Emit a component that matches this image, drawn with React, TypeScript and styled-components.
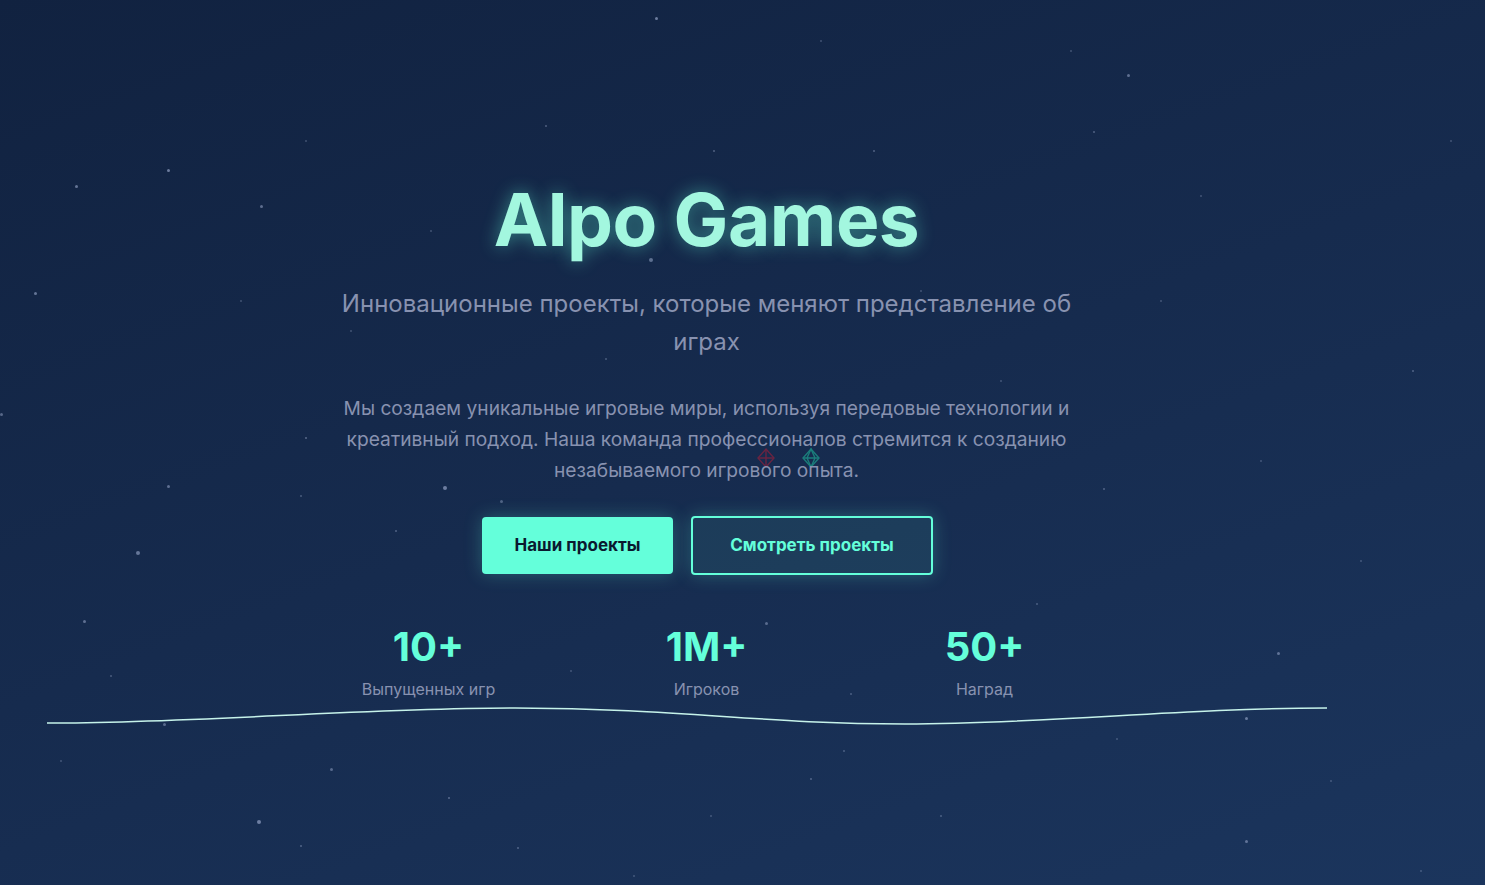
import React from "react";
import styled, { createGlobalStyle } from "styled-components";

const Global = createGlobalStyle`
  html, body { margin: 0; padding: 0; }
  body {
    background: #12243f;
    font-family: Inter, "Noto Sans", "Liberation Sans", sans-serif;
    -webkit-font-smoothing: antialiased;
  }
  * { box-sizing: border-box; }
`;

const Hero = styled.section`
  position: relative;
  overflow: hidden;
  width: 100%;
  height: 885px;
  background: linear-gradient(160deg, #112240 0%, #162b4e 50%, #1b355d 100%);
  padding: 176px 72px 0 0;
  display: flex;
  flex-direction: column;
  align-items: center;
`;

const Stars = styled.div`
  position: absolute;
  inset: 0;
  pointer-events: none;
`;

const Star = styled.span<{ $s: number; $o: number }>`
  position: absolute;
  width: ${(p) => p.$s}px;
  height: ${(p) => p.$s}px;
  border-radius: 50%;
  background: #a8b6d8;
  opacity: ${(p) => p.$o};
`;

const Content = styled.div`
  position: relative;
  z-index: 1;
  display: flex;
  flex-direction: column;
  align-items: center;
  text-align: center;
`;

const Title = styled.h1`
  margin: 0;
  font-size: 73px;
  line-height: 1.2;
  font-weight: 700;
  letter-spacing: -0.5px;
  color: #a3f7df;
  text-shadow: 0 0 18px rgba(100, 255, 218, 0.45);
`;

const Subtitle = styled.p`
  margin: 21px 0 0;
  max-width: 760px;
  font-size: 24px;
  line-height: 38px;
  font-weight: 400;
  color: #8892b0;
`;

const Description = styled.p`
  margin: 32px 0 0;
  max-width: 760px;
  font-size: 19.2px;
  line-height: 31px;
  color: #8892b0;
`;

const Buttons = styled.div`
  display: flex;
  align-items: center;
  gap: 18px;
  margin-top: 30px;
  transform: translateX(1px);
`;

const Button = styled.button<{ $variant: "solid" | "outline" }>`
  font-family: inherit;
  font-size: 17px;
  font-weight: 700;
  cursor: pointer;
  border-radius: 4px;
  padding: 0;
  height: ${(p) => (p.$variant === "solid" ? "57px" : "59px")};
  width: ${(p) => (p.$variant === "solid" ? "191px" : "242px")};
  border: ${(p) => (p.$variant === "solid" ? "none" : "2px solid #64ffda")};
  background: ${(p) => (p.$variant === "solid" ? "#64ffda" : "rgba(100, 255, 218, 0.08)")};
  color: ${(p) => (p.$variant === "solid" ? "#0a192f" : "#64ffda")};
  box-shadow: 0 0 18px rgba(100, 255, 218, 0.25);
`;

const StatsRow = styled.div`
  display: grid;
  grid-template-columns: repeat(3, 278px);
  margin-top: 48px;
`;

const Stat = styled.div`
  display: flex;
  flex-direction: column;
  align-items: center;
`;

const StatValue = styled.div`
  font-size: 40px;
  line-height: 48px;
  font-weight: 700;
  color: #64ffda;
`;

const StatLabel = styled.div`
  margin-top: 8px;
  font-size: 16px;
  line-height: 20px;
  color: #8892b0;
`;

const Wave = styled.svg`
  position: absolute;
  left: 0;
  top: 700px;
  width: 1485px;
  height: 40px;
  pointer-events: none;
`;

const Marks = styled.svg`
  position: absolute;
  left: 756px;
  top: 447px;
  width: 66px;
  height: 22px;
  pointer-events: none;
`;

const stars: [number, number, number, number][] = [
  [655, 17, 3, 0.6], [1127, 74, 3, 0.5], [75, 185, 3, 0.55], [167, 169, 3, 0.6],
  [260, 205, 3, 0.5], [34, 292, 3, 0.55], [1093, 131, 2, 0.4], [545, 125, 2, 0.4],
  [713, 150, 2, 0.4], [873, 150, 2, 0.4], [443, 486, 4, 0.6], [136, 551, 4, 0.55],
  [305, 437, 2, 0.45], [167, 485, 3, 0.5], [83, 620, 3, 0.5], [1277, 652, 3, 0.5],
  [1245, 717, 3, 0.55], [163, 723, 3, 0.45], [330, 768, 3, 0.45], [448, 797, 2, 0.45],
  [257, 820, 4, 0.6], [300, 845, 2, 0.4], [517, 847, 2, 0.4], [810, 778, 2, 0.4],
  [843, 750, 2, 0.35], [940, 815, 2, 0.35], [1245, 840, 3, 0.5], [1412, 370, 2, 0.4],
  [1103, 488, 2, 0.4], [395, 530, 2, 0.4], [1036, 603, 2, 0.35], [765, 622, 3, 0.45],
  [850, 693, 2, 0.35], [605, 358, 2, 0.35], [500, 500, 3, 0.4], [0, 413, 3, 0.45],
  [649, 258, 4, 0.5], [1260, 460, 2, 0.3], [300, 495, 2, 0.35], [1200, 195, 2, 0.3],
  [1360, 560, 2, 0.3], [920, 290, 2, 0.3], [1000, 380, 2, 0.3], [430, 230, 2, 0.3],
  [240, 300, 2, 0.3], [1160, 300, 2, 0.3], [570, 670, 2, 0.3], [1116, 738, 2, 0.3],
  [110, 675, 2, 0.35], [633, 875, 2, 0.3], [1420, 870, 2, 0.3], [1330, 780, 2, 0.3],
  [1450, 140, 2, 0.3], [60, 760, 2, 0.3], [710, 815, 2, 0.3], [905, 245, 2, 0.35],
  [350, 330, 2, 0.3], [1070, 50, 2, 0.3], [305, 140, 2, 0.3], [820, 40, 2, 0.3],
];

const statsData = [
  { value: "10+", label: "Выпущенных игр" },
  { value: "1M+", label: "Игроков" },
  { value: "50+", label: "Наград" },
];

export default function App() {
  return (
    <>
      <Global />
      <Hero>
        <Stars>
          {stars.map(([x, y, s, o], i) => (
            <Star key={i} $s={s} $o={o} style={{ left: x, top: y }} />
          ))}
        </Stars>
        <Wave viewBox="0 0 1485 40">
          <path
            d="M47 23 C 200 23, 360 8, 515 8 C 680 8, 760 24, 905 24 C 1050 24, 1180 8, 1327 8"
            fill="none"
            stroke="#c6f3ea"
            strokeWidth="1.5"
          />
        </Wave>
        <Marks viewBox="0 0 66 22">
          <g stroke="#a0203a" strokeWidth="1.4" fill="none" opacity="0.6">
            <path d="M10 2 L18 11 L10 20 L2 11 Z" />
            <path d="M10 2 V20 M2 11 H18" />
          </g>
          <g stroke="#1fb59a" strokeWidth="1.4" fill="none" opacity="0.6">
            <path d="M55 2 L63 11 L55 20 L47 11 Z" />
            <path d="M47 11 H63 M55 2 L51 11 L55 20 L59 11 Z" />
          </g>
        </Marks>
        <Content>
          <Title>Alpo Games</Title>
          <Subtitle>Инновационные проекты, которые меняют представление об играх</Subtitle>
          <Description>
            Мы создаем уникальные игровые миры, используя передовые технологии и креативный
            подход. Наша команда профессионалов стремится к созданию незабываемого игрового
            опыта.
          </Description>
          <Buttons>
            <Button $variant="solid">Наши проекты</Button>
            <Button $variant="outline">Смотреть проекты</Button>
          </Buttons>
          <StatsRow>
            {statsData.map((s) => (
              <Stat key={s.label}>
                <StatValue>{s.value}</StatValue>
                <StatLabel>{s.label}</StatLabel>
              </Stat>
            ))}
          </StatsRow>
        </Content>
      </Hero>
    </>
  );
}
